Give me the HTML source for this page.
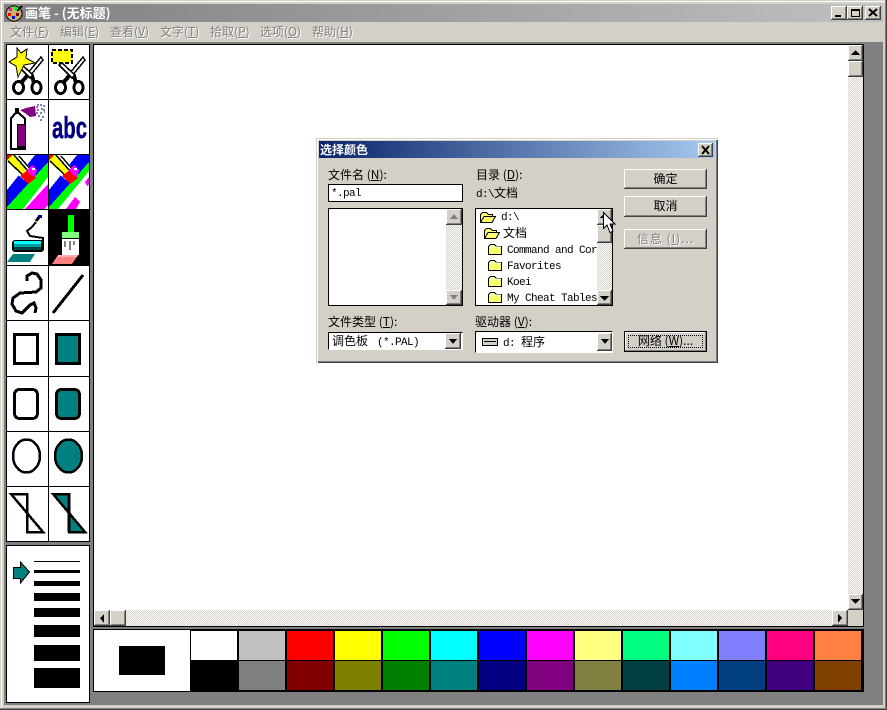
<!DOCTYPE html>
<html><head><meta charset="utf-8"><style>
html,body{margin:0;padding:0;width:887px;height:710px;overflow:hidden;background:#d4d0c8}
.a{position:absolute}
.t{position:absolute;white-space:pre;font:12px/14px "WenQuanYi Zen Hei","Noto Sans CJK SC","Liberation Sans",sans-serif;color:#000}
.m{position:absolute;white-space:pre;font:11px/13px "Liberation Mono","WenQuanYi Zen Hei",monospace;letter-spacing:-.6px;color:#000}
.mi{top:25px;color:#808080;text-shadow:1px 1px 0 #fff}
.btn{position:absolute;background:#d4d0c8;box-shadow:inset -1px -1px #404040,inset 1px 1px #fff,inset -2px -2px #808080}
.d{position:absolute;background:repeating-conic-gradient(#fff 0 25%,#d4d0c8 0 50%) 0 0/2px 2px}
.bl{text-align:center;font:12px/20px "WenQuanYi Zen Hei","Noto Sans CJK SC",sans-serif}
.s{position:absolute;height:29px;width:46px}
</style></head><body>
<div class="a" style="left:0;top:0;width:887px;height:710px;background:#d4d0c8"></div>
<div class="a" style="left:1px;top:1px;width:884px;height:707px;background:#d4d0c8;border-top:1px solid #fff;border-left:1px solid #fff;box-sizing:border-box"></div>
<div class="a" style="left:885px;top:0;width:2px;height:710px;background:#808080"></div>
<div class="a" style="left:886px;top:0;width:1px;height:710px;background:#404040"></div>
<div class="a" style="left:0;top:708px;width:887px;height:2px;background:#808080"></div>
<div class="a" style="left:0;top:709px;width:887px;height:1px;background:#404040"></div>
<div class="a" style="left:4px;top:4px;width:879px;height:18px;background:linear-gradient(90deg,#808080,#c0c0c0)"></div>
<div class="t" style="left:25px;top:6px;color:#fff;font-weight:bold;font-size:13px">画笔 - (无标题)</div>
<div class="t mi" style="left:10px">文件(<u>F</u>)</div>
<div class="t mi" style="left:60px">编辑(<u>E</u>)</div>
<div class="t mi" style="left:110px">查看(<u>V</u>)</div>
<div class="t mi" style="left:160px">文字(<u>T</u>)</div>
<div class="t mi" style="left:210px">拾取(<u>P</u>)</div>
<div class="t mi" style="left:260px">选项(<u>O</u>)</div>
<div class="t mi" style="left:312px">帮助(<u>H</u>)</div>
<div class="btn" style="left:831px;top:6px;width:16px;height:14px"></div>
<div class="btn" style="left:847px;top:6px;width:16px;height:14px"></div>
<div class="btn" style="left:865px;top:6px;width:16px;height:14px"></div>

<div class="a" style="left:4px;top:42px;width:879px;height:663px;background:#808080"></div>

<!-- toolbox -->
<div class="a" style="left:6px;top:44px;width:84px;height:498px;background:#000"></div>
<div class="a" style="left:7px;top:45px;width:82px;height:496px;background:#fff"></div>
<div class="a" style="left:6px;top:545px;width:84px;height:158px;background:#000"></div>
<div class="a" style="left:7px;top:546px;width:82px;height:156px;background:#fff"></div>

<!-- canvas -->
<div class="a" style="left:93px;top:44px;width:771px;height:583px;background:#000"></div>
<div class="a" style="left:94px;top:45px;width:754px;height:565px;background:#fff"></div>
<div class="d" style="left:848px;top:61px;width:15px;height:549px"></div>
<div class="d" style="left:94px;top:610px;width:754px;height:16px"></div>
<div class="a" style="left:848px;top:610px;width:15px;height:16px;background:#d4d0c8"></div>
<div class="btn" style="left:848px;top:45px;width:15px;height:16px"></div>
<div class="btn" style="left:848px;top:61px;width:15px;height:16px"></div>
<div class="btn" style="left:848px;top:594px;width:15px;height:16px"></div>
<div class="btn" style="left:94px;top:610px;width:16px;height:16px"></div>
<div class="btn" style="left:110px;top:610px;width:16px;height:16px"></div>
<div class="btn" style="left:832px;top:610px;width:16px;height:16px"></div>

<!-- palette -->
<div class="a" style="left:93px;top:629px;width:771px;height:63px;background:#000"></div>
<div class="a" style="left:94px;top:630px;width:96px;height:61px;background:#fff"></div>
<div class="a" style="left:119px;top:646px;width:46px;height:29px;background:#000"></div>
<div class="s" style="left:191px;top:631px;background:#fff"></div><div class="s" style="left:239px;top:631px;background:#c0c0c0"></div><div class="s" style="left:287px;top:631px;background:#f00"></div><div class="s" style="left:335px;top:631px;background:#ff0"></div><div class="s" style="left:383px;top:631px;background:#0f0"></div><div class="s" style="left:431px;top:631px;background:#0ff"></div><div class="s" style="left:479px;top:631px;background:#00f"></div><div class="s" style="left:527px;top:631px;background:#f0f"></div><div class="s" style="left:575px;top:631px;background:#ffff80"></div><div class="s" style="left:623px;top:631px;background:#00ff80"></div><div class="s" style="left:671px;top:631px;background:#80ffff"></div><div class="s" style="left:719px;top:631px;background:#8080ff"></div><div class="s" style="left:767px;top:631px;background:#ff0080"></div><div class="s" style="left:815px;top:631px;background:#ff8040"></div>
<div class="s" style="left:239px;top:661px;background:#808080"></div><div class="s" style="left:287px;top:661px;background:#800000"></div><div class="s" style="left:335px;top:661px;background:#808000"></div><div class="s" style="left:383px;top:661px;background:#008000"></div><div class="s" style="left:431px;top:661px;background:#008080"></div><div class="s" style="left:479px;top:661px;background:#000080"></div><div class="s" style="left:527px;top:661px;background:#800080"></div><div class="s" style="left:575px;top:661px;background:#808040"></div><div class="s" style="left:623px;top:661px;background:#004040"></div><div class="s" style="left:671px;top:661px;background:#0080ff"></div><div class="s" style="left:719px;top:661px;background:#004080"></div><div class="s" style="left:767px;top:661px;background:#400080"></div><div class="s" style="left:815px;top:661px;background:#804000"></div>

<!-- dialog -->
<div class="a" style="left:316px;top:138px;width:402px;height:225px;background:#d4d0c8;box-shadow:inset 1px 1px #d4d0c8,inset 2px 2px #fff,inset -1px -1px #404040,inset -2px -2px #808080"></div>
<div class="a" style="left:319px;top:141px;width:396px;height:17px;background:linear-gradient(90deg,#0a246a,#a6caf0)"></div>
<div class="t" style="left:320px;top:143px;color:#fff;font-weight:bold">选择颜色</div>
<div class="btn" style="left:698px;top:143px;width:15px;height:14px"></div>
<div class="t" style="left:328px;top:168px">文件名 (<u>N</u>):</div>
<div class="a" style="left:328px;top:184px;width:135px;height:18px;background:#fff;box-sizing:border-box;border:1px solid #000"></div>
<div class="m" style="left:331px;top:188px">*.pal</div>
<div class="a" style="left:328px;top:208px;width:135px;height:98px;background:#fff;box-sizing:border-box;border:1px solid #000"></div>
<div class="d" style="left:446px;top:225px;width:16px;height:65px"></div>
<div class="btn" style="left:446px;top:209px;width:16px;height:16px"></div>
<div class="btn" style="left:446px;top:290px;width:16px;height:15px"></div>
<div class="t" style="left:328px;top:315px">文件类型 (<u>T</u>):</div>
<div class="a" style="left:328px;top:332px;width:135px;height:18px;background:#fff;box-sizing:border-box;border:1px solid #000;border-right-color:#fff;border-bottom-color:#fff"></div>
<div class="btn" style="left:445px;top:333px;width:16px;height:16px"></div>
<div class="t" style="left:332px;top:334px">调色板<span class="m" style="position:static;margin-left:-3px">  (*.PAL)</span></div>

<div class="t" style="left:476px;top:168px">目录 (<u>D</u>):</div>
<div class="t" style="left:476px;top:186px"><span class="m" style="position:static">d:\</span>文档</div>
<div class="a" style="left:475px;top:208px;width:138px;height:98px;background:#fff;box-sizing:border-box;border:1px solid #000"></div>
<div class="m" style="left:501px;top:212px">d:\</div>
<div class="t" style="left:503px;top:226px">文档</div>
<div class="a" style="left:476px;top:209px;width:121px;height:96px;overflow:hidden">
<div class="m" style="left:31px;top:36px">Command and Cor</div>
<div class="m" style="left:31px;top:52px">Favorites</div>
<div class="m" style="left:31px;top:68px">Koei</div>
<div class="m" style="left:31px;top:84px">My Cheat Tables</div>
</div>
<div class="d" style="left:597px;top:243px;width:15px;height:47px"></div>
<div class="btn" style="left:597px;top:209px;width:15px;height:16px"></div>
<div class="btn" style="left:597px;top:225px;width:15px;height:18px"></div>
<div class="btn" style="left:597px;top:290px;width:15px;height:15px"></div>
<div class="t" style="left:475px;top:315px">驱动器 (<u>V</u>):</div>
<div class="a" style="left:475px;top:331px;width:138px;height:22px;background:#fff;box-sizing:border-box;border:1px solid #000;border-right-color:#fff;border-bottom-color:#fff"></div>
<div class="btn" style="left:597px;top:333px;width:15px;height:18px"></div>
<div class="t" style="left:503px;top:335px"><span class="m" style="position:static">d: </span>程序</div>

<div class="btn bl" style="left:624px;top:169px;width:83px;height:20px">确定</div>
<div class="btn bl" style="left:624px;top:196px;width:83px;height:21px">取消</div>
<div class="btn bl" style="left:624px;top:229px;width:83px;height:20px;color:#808080;text-shadow:1px 1px 0 #fff;letter-spacing:1px">信息 (<u>I</u>)...</div>
<div class="btn bl" style="left:624px;top:331px;width:83px;height:21px;box-shadow:inset 0 0 0 1px #000,inset -2px -2px #808080,inset 2px 2px #fff">网络 (<u>W</u>)...</div>
<div class="a" style="left:628px;top:335px;width:75px;height:13px;box-sizing:border-box;border:1px dotted #000"></div>

<svg class="a" style="left:0;top:0" width="887" height="710" viewBox="0 0 887 710" shape-rendering="crispEdges">
<defs>
<clipPath id="c1"><rect x="7" y="155" width="41" height="54"/></clipPath>
<clipPath id="c2"><rect x="49" y="155" width="40" height="54"/></clipPath>
<symbol id="sc" width="41" height="54" viewBox="7 45 41 54" overflow="visible">
<polygon points="41,57 43,60 30,76 27,74" fill="#fff" stroke="#000" stroke-width="1.5"/>
<polygon points="17,65 20,63 33,75 30,78" fill="#fff" stroke="#000" stroke-width="1.5"/>
<path d="M27 76L21 83M32 76L34 83" stroke="#000" stroke-width="4" fill="none"/>
<ellipse cx="18.5" cy="87.5" rx="5" ry="6" fill="#fff" stroke="#000" stroke-width="3"/>
<ellipse cx="36.5" cy="87.5" rx="4.5" ry="6" fill="#fff" stroke="#000" stroke-width="3"/>
</symbol>
<symbol id="fo" width="14" height="11" viewBox="0 0 14 11"><path d="M.5 10.5V2.5L2.5 .5H6.5L8.5 2.5H13.5V10.5Z" fill="#ffff70" stroke="#000"/><path d="M1 3H13" stroke="#fff"/></symbol>
<symbol id="fp" width="16" height="11" viewBox="0 0 16 11"><path d="M.5 10.5V2.5L2.5 .5H6.5L8.5 2.5H12.5V4.5" fill="#ffff70" stroke="#000"/><path d="M.5 10.5L4 4.5H15.5L12 10.5Z" fill="#ffff70" stroke="#000"/></symbol>
</defs>

<!-- grid lines -->
<path d="M48.5 45V541M7 99.5H89M7 154.5H89M7 209.5H89M7 265.5H89M7 320.5H89M7 376.5H89M7 431.5H89M7 486.5H89" stroke="#000"/>

<!-- title icon -->
<ellipse cx="14" cy="13.5" rx="8" ry="7.5" fill="#c8b070" stroke="#000"/>
<rect x="9" y="8" width="3" height="3" fill="#f0f"/><rect x="14" y="7" width="3" height="3" fill="#0f0"/><rect x="8" y="13" width="3" height="3" fill="#f00"/><rect x="12" y="16" width="3" height="3" fill="#00f"/><rect x="16" y="13" width="3" height="3" fill="#800000"/>
<path d="M17 11L22 6" stroke="#000" stroke-width="2"/>

<!-- window buttons -->
<rect x="835" y="15" width="6" height="2" fill="#000"/>
<path d="M851.5 9.5H859.5V16.5H851.5Z" fill="none" stroke="#000"/><rect x="851" y="9" width="9" height="2" fill="#000"/>
<path d="M869 9L877 16M877 9L869 16" stroke="#000" stroke-width="2" shape-rendering="auto"/>

<!-- scissors + star -->
<use href="#sc" x="7" y="45"/>
<polygon points="17,48 21,53 27,49 26,58 35,63 24,65 18,77 16,66 9,62 17,57" fill="#ff0" stroke="#000"/>
<use href="#sc" x="49" y="45"/>
<rect x="52" y="50" width="20" height="13" fill="#ff0" stroke="#000" stroke-width="2" stroke-dasharray="4 2"/>

<!-- airbrush -->
<path d="M15 108H19V112L26 118V150H10V118L15 112Z" fill="#000"/>
<path d="M16 114H18L24 119V148H12V119Z" fill="#fff"/>
<rect x="17" y="124" width="9" height="24" fill="#000"/>
<rect x="18" y="125" width="7" height="21" fill="#800080"/>
<polygon points="20,110 26,108 35,106 36,116 30,117 25,113" fill="#800080"/>
<path d="M36 107h2M40 105h2M43 106h2M37 110h2M41 109h2M36 113h2M40 113h2M43 110h2M38 116h2M42 117h2M40 120h2M37 105h2M44 112h1" stroke="#000080"/>

<!-- fill tool 1 -->
<g clip-path="url(#c1)">
<polygon points="7,190 35,155 48,155 48,162 7,207" fill="#00f"/>
<polygon points="48,162 48,177 23,209 7,209 7,207" fill="#0f0"/>
<polygon points="48,177 48,186 27,209 23,209" fill="#fff"/>
<polygon points="48,184 48,205 44,209 25,209" fill="#f0f"/>
<polygon points="7,155 20,155 33,171 24,180 7,165" fill="#ffffff"/>
<polygon points="7,155 14,155 26,170 22,175 7,162" fill="#ff0"/>
<path d="M14 155L28 171M8 161L24 176M19 156L32 171" stroke="#000" stroke-width="1.5"/>
<polygon points="20,176 29,169 36,178 28,184" fill="#f00"/>
<polygon points="27,170 32,165 37,170 35,177 31,175" fill="#f0f"/>
<rect x="32" y="168" width="3" height="2" fill="#fff"/>
<path d="M7 155V160L12 155Z" fill="#f00"/>
</g>
<!-- fill tool 2 -->
<g clip-path="url(#c2)">
<polygon points="49,190 77,155 89,155 89,162 49,207" fill="#00f"/>
<polygon points="89,162 89,171 58,209 49,209 49,207" fill="#0f0"/>
<polygon points="75,197 80,202 76,209 66,209" fill="#f0f"/>
<polygon points="89,177 89,184 87,186 85,182" fill="#f0f"/>
<polygon points="49,155 62,155 75,171 66,180 49,165" fill="#ffffff"/>
<polygon points="49,155 56,155 68,170 64,175 49,162" fill="#ff0"/>
<path d="M56 155L70 171M50 161L66 176M61 156L74 171" stroke="#000" stroke-width="1.5"/>
<polygon points="62,176 71,169 78,178 70,184" fill="#f00"/>
<polygon points="69,170 74,165 79,170 77,177 73,175" fill="#f0f"/>
<rect x="74" y="168" width="3" height="2" fill="#fff"/>
<path d="M49 155V160L54 155Z" fill="#f00"/>
</g>

<!-- roller -->
<polygon points="7,262 13,254 35,254 30,262" fill="#008080"/>
<rect x="12" y="240" width="32" height="12" rx="3" fill="#000"/>
<rect x="14" y="241" width="27" height="3" fill="#0ff"/>
<rect x="14" y="244" width="27" height="3" fill="#00a0a0"/>
<rect x="14" y="247" width="27" height="3" fill="#004040"/>
<path d="M43 243V238L30 236L27 231L32 227L36 222" stroke="#000" stroke-width="2" fill="none"/>
<path d="M36 221L40 216" stroke="#000" stroke-width="3"/>
<rect x="38" y="215" width="4" height="3" fill="#000080"/>
<!-- brush -->
<rect x="49" y="210" width="40" height="55" fill="#000"/>
<rect x="68" y="215" width="6" height="17" fill="#0f0"/>
<rect x="62" y="232" width="17" height="6" fill="#80ff80"/>
<rect x="62" y="238" width="17" height="17" fill="#fff"/>
<rect x="62" y="238" width="17" height="1" fill="#000"/>
<path d="M65 241V247M70 241V250M74 241V245" stroke="#000"/>
<polygon points="52,264 58,255 78,255 72,264" fill="#ff8080"/>
<polygon points="57.5,256 58,255 78,255 77,257 57,257" fill="#ffb0b0"/>

<!-- curve & line -->
<path d="M27 281L27 276L32 273L37 274L41 280L41 288L36 292L20 293L13 298L12 304L16 311L22 313L30 305L34 303L36 308L35 313" fill="none" stroke="#000" stroke-width="3"/>
<path d="M53 313L83 275" stroke="#000" stroke-width="3"/>

<!-- rects -->
<rect x="14.5" y="334.5" width="23" height="29" fill="#fff" stroke="#000" stroke-width="3"/>
<rect x="56.5" y="334.5" width="23" height="29" fill="#008080" stroke="#000" stroke-width="3"/>
<rect x="14.5" y="389.5" width="23" height="29" rx="5" fill="#fff" stroke="#000" stroke-width="3"/>
<rect x="56.5" y="389.5" width="23" height="29" rx="5" fill="#008080" stroke="#000" stroke-width="3"/>
<ellipse cx="26.5" cy="456" rx="13.5" ry="16.5" fill="#fff" stroke="#000" stroke-width="2.5"/>
<ellipse cx="68.5" cy="456" rx="13.5" ry="16.5" fill="#008080" stroke="#000" stroke-width="2.5"/>
<polygon points="11,494 27,494 27,532 43,532" fill="#fff" stroke="#000" stroke-width="2.5"/>
<polygon points="53,494 69,494 69,532 85,532" fill="#008080" stroke="#000" stroke-width="2.5"/>
<path d="M69 494V532" stroke="#000" stroke-width="3"/>

<!-- line widths -->
<rect x="34" y="561" width="46" height="1"/><rect x="34" y="570" width="46" height="3"/><rect x="34" y="581" width="46" height="5"/><rect x="34" y="593" width="46" height="8"/><rect x="34" y="608" width="46" height="9"/><rect x="34" y="625" width="46" height="12"/><rect x="34" y="645" width="46" height="16"/><rect x="34" y="668" width="46" height="20"/>
<polygon points="13.5,567.5 20.5,567.5 20.5,562 29.5,572 20.5,583 20.5,578.5 13.5,578.5" fill="#008080" stroke="#000"/>

<!-- main scroll arrows -->
<polygon points="855.5,50 851,55 860,55"/><polygon points="851,599 860,599 855.5,604"/>
<polygon points="100,618 104,614 104,623"/><polygon points="842,618 838,614 838,623"/>

<!-- dialog close -->
<path d="M702 146L709 154M709 146L702 154" stroke="#000" stroke-width="2" shape-rendering="auto"/>
<!-- disabled arrows -->
<polygon points="454,214 450,219 458,219" fill="#808080"/>
<polygon points="450,295 458,295 454,300" fill="#808080"/>
<!-- combo arrows -->
<polygon points="449,339 457,339 453,344"/>
<polygon points="601,339 609,339 605,344"/>
<polygon points="604.5,213 600,218 609,218"/>
<polygon points="600,296 609,296 604.5,301"/>
<!-- folders -->
<use href="#fp" x="480" y="212"/>
<use href="#fp" x="484" y="228"/>
<use href="#fo" x="488" y="244"/>
<use href="#fo" x="488" y="260"/>
<use href="#fo" x="488" y="276"/>
<use href="#fo" x="488" y="292"/>
<!-- drive -->
<rect x="482.5" y="338.5" width="15" height="7" fill="#d4d0c8" stroke="#000"/><rect x="484" y="341" width="12" height="1" fill="#000"/>
<!-- cursor -->
<polygon points="603.5,212.5 603.5,228.5 607,225 610,232.5 613,231 610,224 615,224" fill="#fff" stroke="#000"/>
<!-- abc -->
<text x="52" y="138" font-family="Liberation Sans" font-weight="bold" font-size="31" fill="#000080" stroke="#000080" stroke-width=".5" textLength="35" lengthAdjust="spacingAndGlyphs">abc</text>
</svg>
</body></html>
